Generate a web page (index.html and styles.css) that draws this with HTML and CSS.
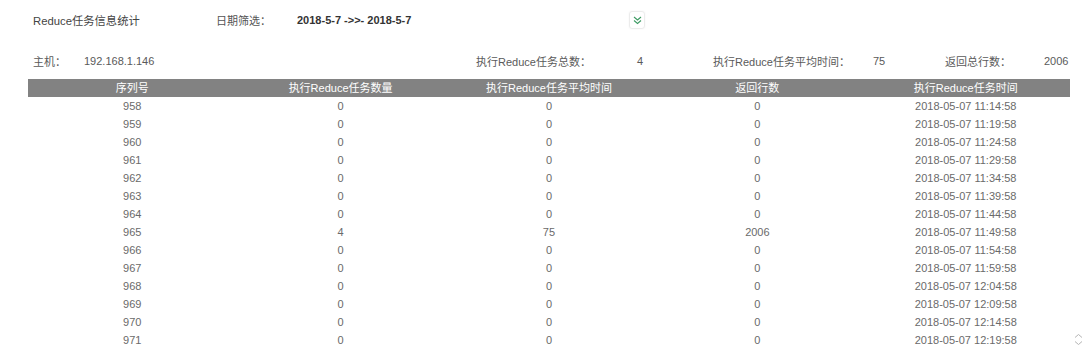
FILE: index.html
```html
<!DOCTYPE html>
<html lang="zh">
<head>
<meta charset="utf-8">
<title>Reduce任务信息统计</title>
<link rel="stylesheet" href="styles.css">
</head>
<body>
<div class="page">
  <div class="top">
    <span class="title">Reduce任务信息统计</span>
    <span class="filter-label">日期筛选：</span>
    <span class="date">2018-5-7 -&gt;&gt;- 2018-5-7</span>
    <span class="toggle">
      <svg width="9" height="9" viewBox="0 0 9 9"><polyline points="1,1 4.5,4 8,1" fill="none" stroke="#3d9b63" stroke-width="1.1"/><polyline points="1,4.5 4.5,7.5 8,4.5" fill="none" stroke="#3d9b63" stroke-width="1.1"/></svg>
    </span>
  </div>
  <div class="info">
    <span class="l1">主机：</span><span class="v1">192.168.1.146</span>
    <span class="l2">执行Reduce任务总数：</span><span class="v2">4</span>
    <span class="l3">执行Reduce任务平均时间：</span><span class="v3">75</span>
    <span class="l4">返回总行数：</span><span class="v4">2006</span>
  </div>
  <table class="grid">
    <thead>
      <tr><th>序列号</th><th>执行Reduce任务数量</th><th>执行Reduce任务平均时间</th><th>返回行数</th><th>执行Reduce任务时间</th></tr>
    </thead>
    <tbody>
      <tr><td>958</td><td>0</td><td>0</td><td>0</td><td>2018-05-07 11:14:58</td></tr>
      <tr><td>959</td><td>0</td><td>0</td><td>0</td><td>2018-05-07 11:19:58</td></tr>
      <tr><td>960</td><td>0</td><td>0</td><td>0</td><td>2018-05-07 11:24:58</td></tr>
      <tr><td>961</td><td>0</td><td>0</td><td>0</td><td>2018-05-07 11:29:58</td></tr>
      <tr><td>962</td><td>0</td><td>0</td><td>0</td><td>2018-05-07 11:34:58</td></tr>
      <tr><td>963</td><td>0</td><td>0</td><td>0</td><td>2018-05-07 11:39:58</td></tr>
      <tr><td>964</td><td>0</td><td>0</td><td>0</td><td>2018-05-07 11:44:58</td></tr>
      <tr><td>965</td><td>4</td><td>75</td><td>2006</td><td>2018-05-07 11:49:58</td></tr>
      <tr><td>966</td><td>0</td><td>0</td><td>0</td><td>2018-05-07 11:54:58</td></tr>
      <tr><td>967</td><td>0</td><td>0</td><td>0</td><td>2018-05-07 11:59:58</td></tr>
      <tr><td>968</td><td>0</td><td>0</td><td>0</td><td>2018-05-07 12:04:58</td></tr>
      <tr><td>969</td><td>0</td><td>0</td><td>0</td><td>2018-05-07 12:09:58</td></tr>
      <tr><td>970</td><td>0</td><td>0</td><td>0</td><td>2018-05-07 12:14:58</td></tr>
      <tr><td>971</td><td>0</td><td>0</td><td>0</td><td>2018-05-07 12:19:58</td></tr>
    </tbody>
  </table>
  <span class="scroll-hint">
    <svg width="9" height="13" viewBox="0 0 9 13"><polyline points="1,4.5 4.5,1.5 8,4.5" fill="none" stroke="#b5b5b5" stroke-width="1"/><polyline points="1,8.5 4.5,11.5 8,8.5" fill="none" stroke="#b5b5b5" stroke-width="1"/></svg>
  </span>
</div>
</body>
</html>
```

FILE: styles.css
```css
html, body {
  margin: 0;
  padding: 0;
  background: #fff;
}
.page {
  position: relative;
  width: 1088px;
  height: 361px;
  overflow: hidden;
  font-family: "Liberation Sans", "Noto Sans CJK SC", sans-serif;
  color: #555;
}
.top {
  display: flex;
  align-items: center;
  height: 40px;
  padding-left: 33px;
  font-size: 12px;
}
.title {
  width: 183px;
  font-size: 11.3px;
  color: #444;
}
.filter-label {
  width: 81px;
  font-size: 11px;
  color: #555;
}
.date {
  width: 332px;
  font-size: 11px;
  font-weight: bold;
  color: #333;
}
.toggle {
  box-sizing: border-box;
  width: 16px;
  height: 18px;
  border: 1px solid #ececec;
  border-radius: 3px;
  display: flex;
  align-items: center;
  justify-content: center;
  box-shadow: 0 0 2px rgba(0,0,0,0.06);
}
.toggle svg { display: block; }
.info {
  display: flex;
  align-items: center;
  height: 18px;
  margin-top: 12px;
  padding-left: 33px;
  font-size: 11px;
  color: #5a5a5a;
}
.l1 { width: 51px; }
.v1 { width: 392px; }
.l2 { width: 161px; }
.v2 { width: 76px; }
.l3 { width: 160px; }
.v3 { width: 72px; }
.l4 { width: 99px; }
.grid {
  margin-top: 9px;
  margin-left: 28px;
  width: 1042px;
  border-collapse: collapse;
  table-layout: fixed;
  font-size: 11px;
}
.grid th {
  height: 18px;
  padding: 0;
  background: #828282;
  color: #fff;
  font-weight: normal;
  text-align: center;
  line-height: 18px;
}
.grid td {
  height: 18px;
  padding: 0;
  text-align: center;
  color: #6a6a6a;
  line-height: 18px;
}
.scroll-hint {
  position: absolute;
  left: 1074px;
  top: 333px;
}
.scroll-hint svg { display: block; }
```
